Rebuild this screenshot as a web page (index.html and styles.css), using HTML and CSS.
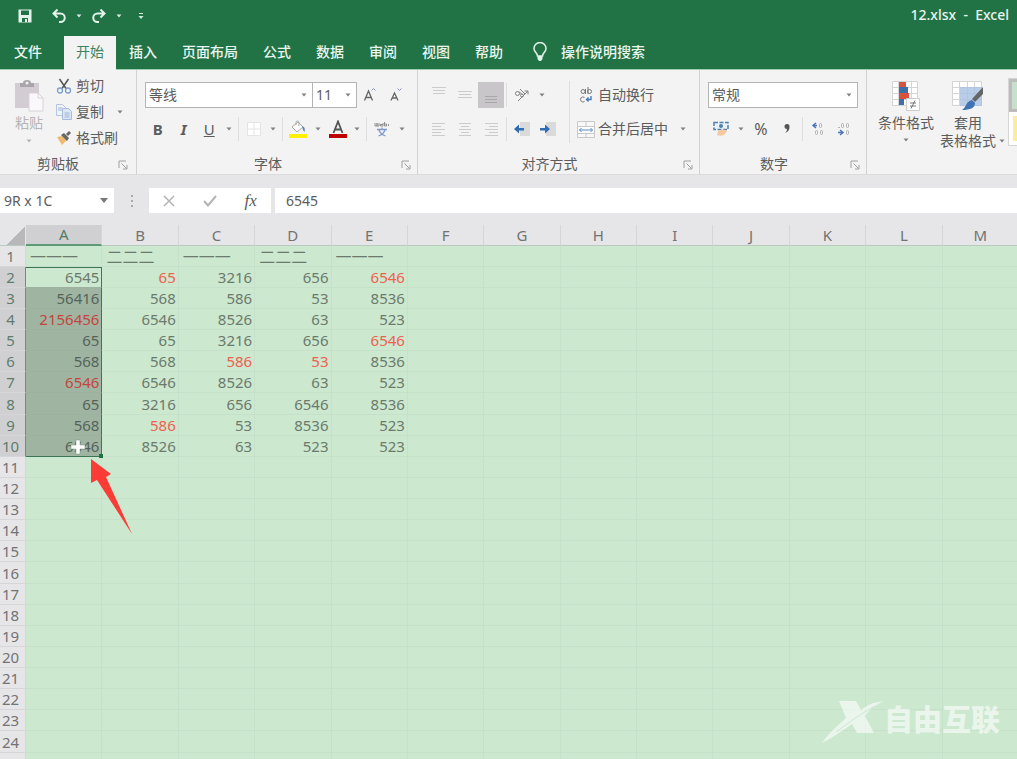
FILE: index.html
```html
<!DOCTYPE html>
<html lang="zh-CN">
<head>
<meta charset="utf-8">
<title>12.xlsx - Excel</title>
<link rel="stylesheet" href="styles.css">
</head>
<body>
<svg class="defs" aria-hidden="true">
  <symbol id="caret" viewBox="0 0 6 4"><path d="M0.5 0.5h5L3 3.5z"/></symbol>
  <symbol id="launch" viewBox="0 0 10 10"><path d="M1 8V1h7M3.500 3.500l5 5M9 5v4H5" fill="none" stroke="#a0a0a0"/></symbol>
</svg>
<div class="app">
  <header class="top">
    <div class="titlebar">
      <div class="quick">
        <button class="q" aria-label="保存"><svg width="14" height="14" viewBox="0 0 14 14"><path d="M0.500 0.500h13v13h-13z" fill="#e4f3ea"/><path d="M3 1.500h8v4.500H3zM4 9h6v4H4z" fill="#217346"/><path d="M7 10h2v3H7z" fill="#e4f3ea"/></svg></button>
        <button class="q" aria-label="撤消"><svg width="14" height="14" viewBox="0 0 14 14" fill="none" stroke="#e4f3ea" stroke-width="2"><path d="M5.500 0.500L1.500 4.500l4 4M2 4.500h6.500a4 4 0 0 1 0 8.500H7"/></svg></button>
        <button class="qa" aria-label="撤消列表"><svg class="caret"><use href="#caret"/></svg></button>
        <button class="q" aria-label="恢复"><svg width="14" height="14" viewBox="0 0 14 14" fill="none" stroke="#e4f3ea" stroke-width="2"><path d="M8.500 0.500l4 4-4 4M12 4.500H5.500a4 4 0 0 0 0 8.500H7"/></svg></button>
        <button class="qa" aria-label="恢复列表"><svg class="caret"><use href="#caret"/></svg></button>
        <button class="q custom" aria-label="自定义快速访问工具栏"><svg width="6" height="7" viewBox="0 0 6 7" fill="#d5eadd"><path d="M1 0h4v1H1zM0.500 3h5L3 6z"/></svg></button>
      </div>
      <div class="title">12.xlsx&nbsp; -&nbsp; Excel</div>
    </div>
    <nav class="tabs">
      <button class="tab file">文件</button>
      <button class="tab active">开始</button>
      <button class="tab">插入</button>
      <button class="tab">页面布局</button>
      <button class="tab">公式</button>
      <button class="tab">数据</button>
      <button class="tab">审阅</button>
      <button class="tab">视图</button>
      <button class="tab">帮助</button>
      <button class="tab tell"><svg width="14" height="20" viewBox="0 0 14 20"><path d="M4.500 14c0-3-3.500-4-3.500-7.500a6 6 0 0 1 12 0c0 3.500-3.500 4.500-3.500 7.500z" fill="none" stroke="#e4f3ea" stroke-width="1.500"/><path d="M4.500 14h5v3l-1.500 2h-2l-1.500-2z" fill="#e4f3ea"/></svg>操作说明搜索</button>
    </nav>
  </header>

  <section class="ribbon">
    <div class="group clip">
      <div class="body">
        <button class="paste"><svg width="30" height="32" viewBox="0 0 30 32"><path d="M1 3h24v25H1z" fill="#d3ccd3"/><path d="M6 3h3a4 3 0 0 1 8 0h3v4H6z" fill="#a9a5a9"/><circle cx="13" cy="3" r="1.500" fill="#f2f2f2"/><path d="M15 13h9l5 5v13H15z" fill="#faf8fa" stroke="#d8d2d8"/><path d="M24 13v5h5" fill="none" stroke="#d8d2d8"/></svg><span>粘贴</span><svg class="caret"><use href="#caret"/></svg></button>
        <div class="cliplist">
          <button class="cmd"><svg width="16" height="16" viewBox="0 0 16 16" fill="none"><path d="M3.500 1l6.500 9.500M12.500 1L6 10.500" stroke="#555" stroke-width="1.500"/><circle cx="4" cy="12.500" r="2.500" stroke="#7d9cc8" stroke-width="1.300"/><circle cx="12" cy="12.500" r="2.500" stroke="#7d9cc8" stroke-width="1.300"/></svg>剪切</button>
          <button class="cmd"><svg width="16" height="16" viewBox="0 0 16 16"><path d="M0.500 0.500h6l3 3v8h-9z" fill="#eef3fa" stroke="#b5c5de"/><path d="M6.500 4.500h6l3 3v8h-9z" fill="#dce7f5" stroke="#a7bbda"/><path d="M2 4h4M2 6h4M8.500 9h5M8.500 11h5M8.500 13h5" stroke="#9db4d6"/></svg>复制<svg class="caret far"><use href="#caret"/></svg></button>
          <button class="cmd"><svg width="16" height="16" viewBox="0 0 16 16"><path d="M1 7l5-1 5 4-5 5z" fill="#eebb70"/><path d="M5 5l3-2 5 5-2 3z" fill="#666"/><path d="M10 4l3-3 2 2-3 3z" fill="#666"/></svg>格式刷</button>
        </div>
      </div>
      <div class="cap"><span>剪贴板</span><button aria-label="剪贴板设置"><svg width="10" height="10"><use href="#launch"/></svg></button></div>
    </div>

    <div class="group font">
      <div class="body rows">
        <div class="row">
          <span class="drop name"><select aria-label="字体"><option>等线</option></select><svg class="caret"><use href="#caret"/></svg></span>
          <span class="drop size"><select aria-label="字号"><option>11</option></select><svg class="caret"><use href="#caret"/></svg></span>
          <button class="b" aria-label="增大字号"><svg width="14" height="16" viewBox="0 0 14 16" fill="none"><path d="M1.500 13.500L5.500 4l4 9.500M3 10.500h5" stroke="#666" stroke-width="1.300"/><path d="M8.500 3.500l2-2 2 2" stroke="#8095bd"/></svg></button>
          <button class="b" aria-label="减小字号"><svg width="14" height="16" viewBox="0 0 14 16" fill="none"><path d="M2 13.500L5.500 6 9 13.500M3.500 11h4" stroke="#666" stroke-width="1.300"/><path d="M8.500 1.500l2 2 2-2" stroke="#8095bd"/></svg></button>
        </div>
        <div class="row">
          <button class="b bold">B</button><button class="b ital">I</button><button class="b under">U</button><button class="a" aria-label="下划线选项"><svg class="caret"><use href="#caret"/></svg></button>
          <i class="sep"></i>
          <button class="b" aria-label="边框"><svg width="14" height="14" viewBox="0 0 14 14"><path d="M0.500 0.500h13v13h-13z" fill="#fff" stroke="#e4e4e4"/><path d="M7 1v12M1 7h12" stroke="#e4e4e4"/></svg></button><button class="a" aria-label="边框选项"><svg class="caret"><use href="#caret"/></svg></button>
          <i class="sep"></i>
          <button class="b" aria-label="填充颜色"><svg width="18" height="18" viewBox="0 0 18 18"><path d="M3 7l6-5 5 5-6 5z" fill="#fff" stroke="#aaa"/><path d="M7 5V2.500a1.500 1.500 0 0 1 3 0V6" fill="none" stroke="#aaa"/><path d="M13 6c3 1 3 3 2.500 6-1-1-1.500-2-2-4z" fill="#5b82bd"/><path d="M0 14h18v4H0z" fill="#fff200"/></svg></button><button class="a" aria-label="填充选项"><svg class="caret"><use href="#caret"/></svg></button>
          <button class="b" aria-label="字体颜色"><svg width="18" height="18" viewBox="0 0 18 18"><path d="M4.500 13L9 1.500l4.500 11.500M6 9.500h6" fill="none" stroke="#555" stroke-width="1.800"/><path d="M0 14h18v4H0z" fill="#c00000"/></svg></button><button class="a" aria-label="字体颜色选项"><svg class="caret"><use href="#caret"/></svg></button>
          <i class="sep"></i>
          <button class="b" aria-label="拼音"><svg width="16" height="16" viewBox="0 0 16 16" fill="none"><path d="M1 2v3h2V2v3h2V2M6.500 3.500h2.500M6.500 3v2h2.500V2M10.500 1v4h2V3h-2M14.500 3v2" stroke="#909090"/><path d="M3 8.500h10M8 6.500v2M5 9c1 3 3.500 5 6.500 6M11 9c-1 3-3.500 5-6.500 6" stroke="#7f9bcb" stroke-width="1.300"/></svg></button><button class="a" aria-label="拼音选项"><svg class="caret"><use href="#caret"/></svg></button>
        </div>
      </div>
      <div class="cap"><span>字体</span><button aria-label="字体设置"><svg width="10" height="10"><use href="#launch"/></svg></button></div>
    </div>

    <div class="group align">
      <div class="body">
        <div class="rows">
          <div class="row">
            <button class="b" aria-label="顶端对齐"><svg width="14" height="16" viewBox="0 0 14 16" stroke="#cbcbcb"><path d="M0 0.500h14M1 3.500h12M1 6.500h12"/></svg></button>
            <button class="b" aria-label="垂直居中"><svg width="14" height="16" viewBox="0 0 14 16" stroke="#cbcbcb"><path d="M0 4.500h14M1 7.500h12M0 10.500h14"/></svg></button>
            <button class="b on" aria-label="底端对齐"><svg width="14" height="16" viewBox="0 0 14 16" stroke="#a9a7aa"><path d="M1 9.500h12M1 12.500h12M1 15.500h12"/></svg></button>
            <i class="sep"></i>
            <button class="b" aria-label="方向"><svg width="16" height="16" viewBox="0 0 16 16" fill="none" stroke="#808080"><path d="M4 14L14 4M10.500 4H14v3.500"/><circle cx="3.500" cy="6.500" r="2"/><path d="M5 4.500l3 3M6 2l5 5"/><circle cx="8" cy="8.500" r="1.500"/></svg></button><button class="a" aria-label="方向选项"><svg class="caret"><use href="#caret"/></svg></button>
          </div>
          <div class="row">
            <button class="b" aria-label="左对齐"><svg width="14" height="14" viewBox="0 0 14 14" stroke="#cbcbcb"><path d="M0 1.500h13M0 4.500h9M0 7.500h13M0 10.500h9M0 13.500h13"/></svg></button>
            <button class="b" aria-label="居中"><svg width="14" height="14" viewBox="0 0 14 14" stroke="#cbcbcb"><path d="M1 1.500h12M3 4.500h8M1 7.500h12M3 10.500h8M1 13.500h12"/></svg></button>
            <button class="b" aria-label="右对齐"><svg width="14" height="14" viewBox="0 0 14 14" stroke="#cbcbcb"><path d="M1 1.500h13M5 4.500h9M1 7.500h13M5 10.500h9M1 13.500h13"/></svg></button>
            <i class="sep"></i>
            <button class="b" aria-label="减少缩进"><svg width="18" height="14" viewBox="0 0 18 14"><path d="M7 0h10v14H7z" fill="#dadada"/><path d="M1 7l5-4.500V6h5v2.500H6v3z" fill="#2f6db5"/></svg></button>
            <button class="b" aria-label="增加缩进"><svg width="18" height="14" viewBox="0 0 18 14"><path d="M7 0h10v14H7z" fill="#dadada"/><path d="M11 7L6 2.500V6H1v2.500h5v3z" fill="#2f6db5"/></svg></button>
          </div>
        </div>
        <i class="sep tall"></i>
        <div class="rows wide">
          <div class="row"><button class="cmd"><svg width="18" height="16" viewBox="0 0 18 16" fill="none" stroke="#777"><circle cx="6" cy="4.500" r="2"/><path d="M8.500 2v5M11 0v7M7.500 10.500a2.500 2.500 0 1 0 0 4"/><circle cx="12.500" cy="4.500" r="2"/><path d="M14 9v3.500H9.500M11.500 10.500l-2 2 2 2" stroke="#3f78bd" stroke-width="1.300"/></svg>自动换行</button></div>
          <div class="row"><button class="cmd"><svg width="18" height="17" viewBox="0 0 18 17"><path d="M0.500 0.500h17v16H0.500z" fill="#f8f8f8" stroke="#c8c8c8"/><path d="M0 5.500h18M0 12.500h18M9 0v5M9 13v4" stroke="#c8c8c8"/><path d="M1 6h16v6H1z" fill="#fff"/><path d="M2.500 9h13M4.500 7l-2 2 2 2M13.500 7l2 2-2 2" fill="none" stroke="#5c8bc5"/></svg>合并后居中<svg class="caret far"><use href="#caret"/></svg></button></div>
        </div>
      </div>
      <div class="cap"><span>对齐方式</span><button aria-label="对齐设置"><svg width="10" height="10"><use href="#launch"/></svg></button></div>
    </div>

    <div class="group number">
      <div class="body rows">
        <div class="row"><span class="drop fmt"><select aria-label="数字格式"><option>常规</option></select><svg class="caret"><use href="#caret"/></svg></span></div>
        <div class="row">
          <button class="b" aria-label="会计数字格式"><svg width="16" height="16" viewBox="0 0 16 16"><path d="M1 1.500h14v7H1z" fill="#e9f1f9" stroke="#4f7fae" stroke-width="1.500" stroke-dasharray="4 1.500"/><circle cx="8" cy="5" r="2" fill="#4f7fae"/><path d="M5 10c3-2 7-2 9 0l-2 3c-2 2-5 2-8 1z" fill="#f5c8a0"/></svg></button><button class="a" aria-label="会计格式选项"><svg class="caret"><use href="#caret"/></svg></button>
          <button class="b pct">%</button><button class="b comma" aria-label="千位分隔样式"><svg width="8" height="12" viewBox="0 0 8 12"><path d="M4 1a2.500 2.500 0 1 0 0 5c0 2-1 3-2 4 3-1 4.500-3 4.500-6A2.700 2.700 0 0 0 4 1z" fill="#555"/></svg></button>
          <i class="sep"></i>
          <button class="b" aria-label="增加小数位数"><svg width="14" height="14" viewBox="0 0 14 14" fill="none"><path d="M5 1L2 3.500 5 6M2 3.500h4" stroke="#4c74b8" stroke-width="1.500"/><g stroke="#b0b0b0"><rect x="8.500" y="1.500" width="2" height="4" rx="1"/><rect x="4.500" y="8.500" width="2" height="4" rx="1"/><rect x="9.500" y="8.500" width="2" height="4" rx="1"/></g></svg></button>
          <button class="b" aria-label="减少小数位数"><svg width="14" height="14" viewBox="0 0 14 14" fill="none"><g stroke="#b0b0b0"><rect x="4.500" y="1.500" width="2" height="4" rx="1"/><rect x="9.500" y="1.500" width="2" height="4" rx="1"/><rect x="9.500" y="8.500" width="2" height="4" rx="1"/><path d="M1 5.500h2"/></g><path d="M3 8l3 2.500L3 13M1 10.500h5" stroke="#4c74b8" stroke-width="1.500"/></svg></button>
        </div>
      </div>
      <div class="cap"><span>数字</span><button aria-label="数字设置"><svg width="10" height="10"><use href="#launch"/></svg></button></div>
    </div>

    <div class="group styles">
      <button class="big"><svg width="30" height="30" viewBox="0 0 30 30"><path d="M1.500 0.500h25v24h-25z" fill="#fff" stroke="#d4d4d4"/><path d="M1 6.500h26M1 12.500h26M1 18.500h26M7.500 0v25M20.500 0v25" stroke="#d4d4d4"/><path d="M8 1h7v5H8zM8 12h10v6H8z" fill="#d9533c"/><path d="M8 6h9v6H8zM8 18h5v6H8z" fill="#3f6fa8"/><path d="M15.500 17.500h13v12h-13z" fill="#fff" stroke="#ccc"/><path d="M19 22h6M19 25h6M24 19.500l-4 8" stroke="#777"/></svg><span>条件格式</span><svg class="caret"><use href="#caret"/></svg></button>
      <button class="big"><svg width="32" height="30" viewBox="0 0 32 30"><path d="M0.500 0.500h29v24H0.500z" fill="#fff" stroke="#d4d4d4"/><path d="M0 6.500h30M0 12.500h30M0 18.500h30M7.500 0v25M15.500 0v25M22.500 0v25" stroke="#d4d4d4"/><path d="M8 6h22v19H8z" fill="#a9c1e2" fill-opacity=".8"/><path d="M31 6v7l-8 8-3-3z" fill="#666"/><path d="M20 19l3 3c0 5-5 7-13 7 4-2 4-9 10-10z" fill="#3f73b3"/></svg><span>套用</span><span class="line">表格格式<svg class="caret"><use href="#caret"/></svg></span></button>
      <div class="gallery"><button class="good" aria-label="好"></button><button class="neutral" aria-label="适中"></button></div>
    </div>
  </section>

  <section class="fbar">
    <div class="namebox"><input aria-label="名称框" value="9R x 1C"><button aria-label="名称列表"><svg width="8" height="5"><path d="M0 0h8L4 5z" fill="#777"/></svg></button></div>
    <div class="dots"><i></i><i></i><i></i></div>
    <div class="fx">
      <button aria-label="取消"><svg width="12" height="12" viewBox="0 0 12 12"><path d="M1 1l10 10M11 1L1 11" stroke="#b4b4b4" stroke-width="1.500"/></svg></button>
      <button aria-label="输入"><svg width="14" height="12" viewBox="0 0 14 12"><path d="M1 6l4 4.500L13 1" fill="none" stroke="#b4b4b4" stroke-width="2"/></svg></button>
      <button class="fn">fx</button>
    </div>
    <input class="formula" aria-label="编辑栏" value="6545">
  </section>

  <main class="sheet">
    <table>
      <thead><tr id="cols"></tr></thead>
      <tbody id="cells"></tbody>
    </table>
    <svg class="pointer" width="42" height="76" viewBox="0 0 42 76"><path d="M0 0l20 15-5 3 26 57L6 21l-6 3z" fill="#fb3b36"/></svg>
    <div class="mark"><svg width="62" height="44" viewBox="0 0 62 44"><path d="M17 1h17l5 9c6-5 12-8 23-9-9 4-15 9-19 15l9 17H35l-5-9C20 31 10 38 0 43c5-8 15-17 24-25z" fill="#fff"/><path d="M14 32C28 22 38 14 53 6" fill="none" stroke="#cce8cf"/></svg><span>自由互联</span></div>
  </main>
</div>
<script src="sheet.js"></script>
</body>
</html>
```
FILE: styles.css
```css
* { box-sizing: border-box; }
body {
  margin: 0;
  font: 14px/20px "Noto Sans", "Noto Sans CJK SC", sans-serif;
  color: #5c5c5c;
  background: #e6e6e8;
}
button, input, select { font: inherit; color: inherit; border: 0; margin: 0; padding: 0; background: none; border-radius: 0; }
button { display: flex; align-items: center; justify-content: center; white-space: nowrap; }
svg { flex: none; display: block; }
.defs { position: absolute; width: 0; height: 0; }
.caret { width: 6px; height: 4px; fill: #808080; }

.app { height: 100vh; display: flex; flex-direction: column; overflow: hidden; }

.top { background: #217346; color: #e9f5ee; border-bottom: 1px solid #9fcdb4; }
.titlebar { display: flex; justify-content: space-between; height: 36px; padding: 0 8px 4px 12px; align-items: center; }
.quick { display: flex; align-items: center; }
.quick .caret { fill: #d5eadd; }
.q { width: 26px; height: 24px; }
.q + .q { margin-left: 8px; }
.qa { width: 14px; height: 24px; }
.q.custom { margin-left: 2px; }
.title { line-height: 20px; padding-bottom: 2px; font-weight: 500; }
.tabs { display: flex; gap: 1px; height: 34px; margin-bottom: -1px; }
.tab { padding: 0 12px 2px; font-weight: 500; }
.tab.file { padding: 0 14px 2px; margin-right: 7px; }
.tab.active { background: #f3f3f3; color: #3d8460; font-weight: 400; }
.tab.tell { gap: 14px; padding-left: 17px; }

.ribbon { display: flex; height: 105px; background: #f3f3f3; border-bottom: 1px solid #dcdcdc; overflow: hidden; flex: none; }
.group { display: flex; flex-direction: column; justify-content: space-between; flex: none; padding: 8px 8px 0; }
.group:not(.styles) { border-right: 1px solid #d2d2d2; }
.clip { width: 137px; }
.font { width: 281px; }
.align { width: 282px; }
.number { width: 167px; }
.body { display: flex; }
.rows { display: flex; flex-direction: column; gap: 8px; padding-top: 4px; }
.align .body { align-items: flex-start; }
.row { display: flex; height: 26px; align-items: center; }
.b { width: 26px; height: 26px; }
.b.on { background: #c8c6c9; }
.a { width: 14px; height: 26px; }
.sep { width: 1px; height: 24px; margin: 0 2px; background: #dedede; }
.sep.tall { height: 62px; margin: 3px 7px 0 8px; }
.bold { font-weight: 700; font-size: 15px; }
.ital { font-style: italic; font-weight: 700; font-size: 15px; }
.under { text-decoration: underline; font-size: 15px; }
.pct { font-size: 16px; }

.cap { display: flex; height: 20px; margin: 0 -8px; }
.clip .cap { padding-right: 2px; }
.cap span { flex: 1; text-align: center; }
.cap button { width: 18px; height: 20px; justify-content: flex-start; padding-left: 2px; padding-top: 2px; }

.clip .body { gap: 8px; padding-left: 2px; margin-top: -2px; }
.paste { flex-direction: column; justify-content: flex-start; width: 38px; padding-top: 4px; color: #b5b5b5; gap: 1px; }
.paste .caret { fill: #b5b5b5; margin-top: 5px; }
.cliplist { display: flex; flex-direction: column; gap: 6px; }
.cmd { gap: 4px; height: 20px; justify-content: flex-start; }
.far { margin-left: 9px; }
.wide .cmd { height: 26px; gap: 3px; }

.drop { display: grid; align-items: center; height: 26px; border: 1px solid #b4b4b4; background: #fff; }
.drop select { grid-area: 1 / 1; appearance: none; width: 100%; height: 24px; padding-left: 3px; }
.drop .caret { grid-area: 1 / 1; justify-self: end; margin-right: 5px; pointer-events: none; }
.drop.name { width: 168px; }
.drop.size { width: 44px; border-left: 0; }
.drop.fmt { width: 150px; }

.group.styles { flex-direction: row; justify-content: flex-start; }
.big { flex-direction: column; justify-content: flex-start; padding-top: 3px; width: 62px; line-height: 18px; }
.big > span:first-of-type { margin-top: 3px; }
.big + .big { width: 62px; }
.big > .caret { margin-top: 6px; }
.line { display: flex; align-items: center; gap: 3px; }
.line .caret { margin-right: -9px; }
.gallery { width: 76px; height: 68px; margin-left: 9px; background: #fff; border: 1px solid #d5d5d5; }
.gallery button { width: 100%; height: 33px; }
.good { background: #c6e0cb; border: 3px solid #bcbcbc; }
.gallery .neutral { background: #ffeb9c; border: 4px solid #fff; }

.fbar { display: flex; height: 25px; margin: 13px 0 12px; flex: none; }
.namebox { display: flex; width: 114px; background: #fff; }
.namebox input { width: 94px; padding-left: 4px; }
.namebox button { width: 20px; }
.dots { display: flex; flex-direction: column; justify-content: center; align-items: center; gap: 3px; width: 35px; }
.dots i { width: 2px; height: 2px; background: #aaa; }
.fx { display: flex; width: 122px; background: #fff; margin-right: 4px; }
.fx button { flex: 1; }
.fn { font: italic 17px "Liberation Serif", serif; }
.formula { flex: 1; background: #fff; padding-left: 11px; }

.sheet { position: relative; flex: 1; overflow: hidden; background: #cce8cf; }
table { width: calc(100% + 2px); table-layout: fixed; border-collapse: separate; border-spacing: 0; font-size: 15px; line-height: 20px; color: #6b7a6d; }
th, td { height: 21px; padding: 0; border-right: 1px solid #c6e0c9; border-bottom: 1px solid #c6e0c9; font-weight: 400; white-space: nowrap; }
tbody tr:nth-child(8n) > * { height: 22px; }
th { background: #e6e6e8; color: #737373; text-align: center; border-color: #d6d6d8; }
thead th { border-bottom-color: #b9cbbd; }
tbody th { padding-right: 4px; }
th.corner { width: 26px; border-right-color: #e6e6e8; background: linear-gradient(135deg, #e6e6e8 60%, #b8b8ba 60%); }
thead th.hot { background: #d0d0d2; color: #4f7d64; border-bottom: 2px solid #5e9a78; line-height: 19px; }
tbody th.hot { background: #d0d0d2; color: #5d7d6c; border-right-color: #6c917a; }
td { text-align: right; padding-right: 2px; }
td.txt { text-align: left; padding: 0 0 0 4px; font-size: 16px; font-family: "Noto Sans CJK SC", sans-serif; font-weight: 400; }
td.red { color: #f0604f; }
td.pick { background: #9fb5a2; color: #566359; border-right-color: #3e7556; border-bottom-color: #9cb29f; }
td.pick.red { color: #c4453d; }
td.first { background: #cce8cf; color: #6b7a6d; box-shadow: inset 0 1px #3e7556; }
td.pick.last { position: relative; border-bottom-color: #3e7556; }
td.last::after { content: ""; position: absolute; right: -2px; bottom: -2px; width: 4px; height: 4px; background: #217346; }
.cross { position: absolute; right: 15px; top: 3px; }
.pointer { position: absolute; left: 91px; top: 234px; }
.mark { position: absolute; right: 17px; bottom: 15px; display: flex; opacity: .6; color: #fff; }
.mark span { font: 900 29px/36px "Noto Sans CJK SC", sans-serif; }
```
FILE: sheet.js
```js
const letters = "ABCDEFGHIJKLM".split("");
const data = [
  ["一一一", "二二二", "一一一", "二二二", "一一一"],
  ["6545", "*65", "3216", "656", "*6546"],
  ["56416", "568", "586", "53", "8536"],
  ["*2156456", "6546", "8526", "63", "523"],
  ["65", "65", "3216", "656", "*6546"],
  ["568", "568", "*586", "*53", "8536"],
  ["*6546", "6546", "8526", "63", "523"],
  ["65", "3216", "656", "6546", "8536"],
  ["568", "*586", "53", "8536", "523"],
  ["6546", "8526", "63", "523", "523"]
];
const cross = '<svg class="cross" width="16" height="16" viewBox="0 0 16 16"><path d="M6 1h4v5h5v4h-5v5H6v-5H1V6h5z" fill="#fff" stroke="#7d8f80" stroke-width="0.500"/></svg>';

document.getElementById("cols").innerHTML = '<th class="corner"></th>' +
  letters.map((l, i) => `<th class="${i === 0 ? "hot" : ""}">${l}</th>`).join("");

let html = "";
for (let r = 1; r <= 25; r++) {
  const picked = r >= 2 && r <= 10;
  html += `<tr><th class="${picked ? "hot" : ""}">${r}</th>`;
  letters.forEach((l, c) => {
    let v = (data[r - 1] || [])[c] || "";
    const cls = [];
    if (v[0] === "*") { cls.push("red"); v = v.slice(1); }
    if (r === 1) cls.push("txt");
    if (picked && c === 0) cls.push("pick");
    if (r === 2 && c === 0) cls.push("first");
    if (r === 10 && c === 0) { cls.push("last"); v += cross; }
    html += `<td class="${cls.join(" ")}">${v}</td>`;
  });
  html += "</tr>";
}
document.getElementById("cells").innerHTML = html;
```
